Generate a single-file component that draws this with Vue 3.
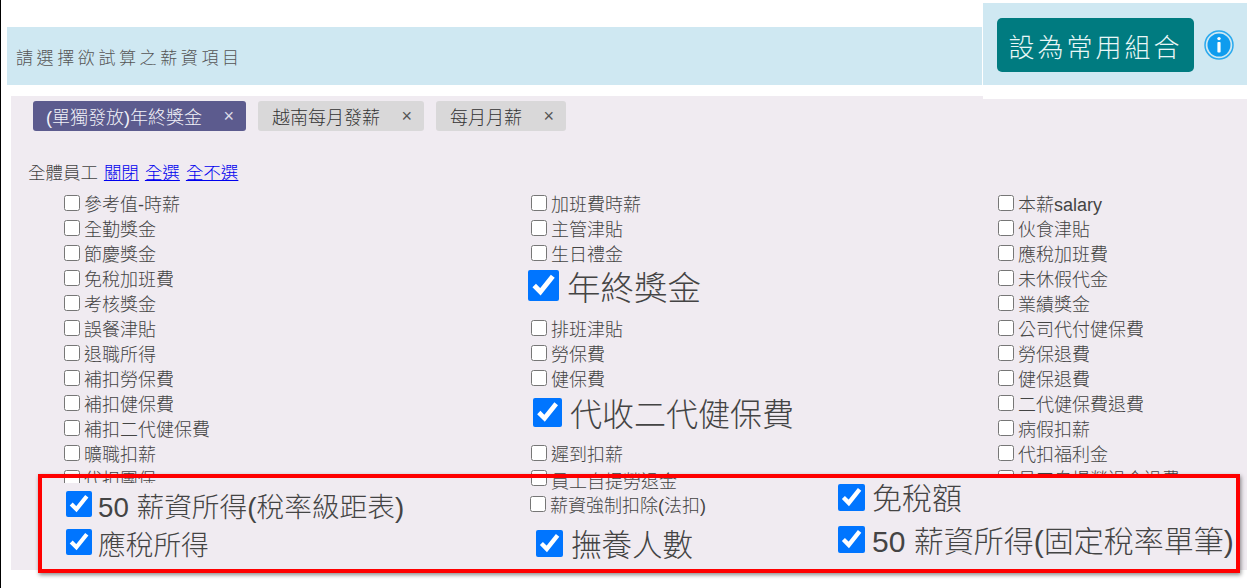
<script setup>
import { ref } from 'vue';

const tags = ref([
  { text: '(單獨發放)年終獎金', active: true },
  { text: '越南每月發薪', active: false },
  { text: '每月月薪', active: false }
]);

const columns = ref([
  [
    { text: '參考值-時薪' }, { text: '全勤獎金' }, { text: '節慶獎金' }, { text: '免稅加班費' },
    { text: '考核獎金' }, { text: '誤餐津貼' }, { text: '退職所得' }, { text: '補扣勞保費' },
    { text: '補扣健保費' }, { text: '補扣二代健保費' }, { text: '曠職扣薪' }, { text: '代扣團保' }
  ],
  [
    { text: '加班費時薪' }, { text: '主管津貼' }, { text: '生日禮金' },
    { text: '年終獎金', checked: true, cls: 'big-year' },
    { text: '排班津貼' }, { text: '勞保費' }, { text: '健保費' },
    { text: '代收二代健保費', checked: true, cls: 'big-fee' },
    { text: '遲到扣薪' }, { text: '員工自提勞退金', cls: 'low' }
  ],
  [
    { text: '本薪salary' }, { text: '伙食津貼' }, { text: '應稅加班費' }, { text: '未休假代金' },
    { text: '業績獎金' }, { text: '公司代付健保費' }, { text: '勞保退費' }, { text: '健保退費' },
    { text: '二代健保費退費' }, { text: '病假扣薪' }, { text: '代扣福利金' }, { text: '員工自提勞退金退費' }
  ]
]);
</script>

<template>
  <div class="page">
    <div class="head">
      <div class="head-title">請選擇欲試算之薪資項目</div>
      <div class="head-side">
        <div class="side-inner">
          <button class="save-btn">設為常用組合</button>
          <svg class="info" viewBox="0 0 30 30" width="30" height="30">
            <circle cx="15" cy="15" r="14" fill="none" stroke="#2aa9ee" stroke-width="1.5" />
            <circle cx="15" cy="15" r="11.5" fill="#0f9cee" />
            <circle cx="15" cy="8.6" r="1.7" fill="#fff" />
            <rect x="13.4" y="12" width="3.2" height="10.5" rx="0.8" fill="#fff" />
          </svg>
        </div>
      </div>
    </div>

    <div class="panel">
      <div class="tags">
        <div v-for="tag in tags" :key="tag.text" class="tag" :class="{ active: tag.active }">
          <span>{{ tag.text }}</span>
          <span class="tag-x">×</span>
        </div>
      </div>

      <div class="group-line">
        全體員工
        <a class="first-link" href="#">關閉</a>
        <a href="#">全選</a>
        <a href="#">全不選</a>
      </div>

      <div class="columns">
        <div v-for="(col, i) in columns" :key="i" class="col">
          <label v-for="item in col" :key="item.text" class="row" :class="item.cls">
            <input type="checkbox" :checked="item.checked" />
            <span>{{ item.text }}</span>
          </label>
        </div>
      </div>

      <div class="mark">
        <div class="mark-col first">
          <label class="mark-row"><input type="checkbox" checked /><span>50 薪資所得(稅率級距表)</span></label>
          <label class="mark-row"><input type="checkbox" checked /><span>應稅所得</span></label>
        </div>
        <div class="mark-col second">
          <label class="plain"><input type="checkbox" /><span>薪資強制扣除(法扣)</span></label>
          <label class="raise"><input type="checkbox" checked /><span>撫養人數</span></label>
        </div>
        <div class="mark-col third">
          <label class="tax"><input type="checkbox" checked /><span>免稅額</span></label>
          <label class="tax last"><input type="checkbox" checked /><span>50 薪資所得(固定稅率單筆)</span></label>
        </div>
      </div>
    </div>
  </div>
</template>

<style>
html,
body {
  margin: 0;
  background: #fff;
}
</style>

<style scoped>
.page {
  width: 1254px;
  height: 588px;
  box-sizing: border-box;
  border-left: 1px solid #000;
  padding: 3px 7px 0 6px;
  overflow: hidden;
  font-family: "Liberation Sans", "Noto Sans CJK TC", sans-serif;
  font-weight: 300;
  color: #444;
}

.head {
  display: flex;
  height: 96px;
}

.head-title {
  flex: 1;
  height: 58px;
  margin-top: 24px;
  padding-left: 9px;
  background: #cfe8f2;
  font-size: 17px;
  letter-spacing: 3.6px;
  line-height: 64px;
  color: #555;
}

.head-side {
  width: 264px;
  margin-left: 1px;
  padding-bottom: 14px;
  background: #fff;
  position: relative;
  z-index: 1;
}

.side-inner {
  display: flex;
  align-items: center;
  height: 82px;
  padding-left: 14px;
  padding-top: 2px;
  box-sizing: border-box;
  background: #cfe8f2;
}

.save-btn {
  width: 197px;
  height: 54px;
  border: none;
  border-radius: 5px;
  background: #007b80;
  color: #e9f7f7;
  font-family: inherit;
  font-weight: 300;
  font-size: 26px;
  letter-spacing: 3px;
  padding: 0;
}

.info {
  margin-left: 10px;
}

.panel {
  position: relative;
  height: 474px;
  margin-left: 4px;
  margin-top: -3px;
  background: #f0ebf1;
}

.tags {
  display: flex;
  gap: 12px;
  padding: 5px 0 0 22px;
}

.tag {
  display: flex;
  align-items: center;
  justify-content: space-between;
  height: 30px;
  padding: 0 12px 0 14px;
  gap: 21.5px;
  border-radius: 3px;
  background: #d9d8d9;
  font-size: 18px;
  color: #333;
}

.tag.active {
  padding-left: 13px;
  background: #5c5b8e;
  color: #f2f2f8;
}

.tag-x {
  font-size: 18px;
  color: #555;
}

.tag.active .tag-x {
  color: #dcdce8;
}

.group-line {
  padding: 30px 0 0 17px;
  height: 24px;
  font-size: 17.5px;
  line-height: 24px;
}

.group-line a {
  margin-left: 6px;
  color: #00e;
}

.group-line a.first-link {
  margin-left: 1px;
}

.columns {
  display: flex;
  padding: 5px 0 0 53px;
}

.col {
  display: flex;
  flex-direction: column;
  flex: none;
  width: 467px;
}

.row {
  display: flex;
  align-items: center;
  height: 25px;
  font-size: 18px;
}

input {
  margin: 0;
  flex: none;
}

.row input {
  width: 16px;
  height: 16px;
  margin-right: 4px;
}

.row.low span {
  padding-top: 4px;
}

.row.big-year {
  height: 50px;
  box-sizing: border-box;
  padding-bottom: 10px;
  margin-left: -3px;
  font-size: 33.5px;
}

.row.big-year input {
  width: 31px;
  height: 31px;
  margin-right: 8px;
}

.row.big-fee {
  height: 50px;
  box-sizing: border-box;
  padding-bottom: 6px;
  margin-left: 2px;
  font-size: 32px;
}

.row.big-fee input {
  width: 29px;
  height: 29px;
  margin-right: 8px;
}

.mark {
  position: absolute;
  left: 27px;
  top: 378px;
  display: flex;
  width: 1202px;
  height: 99px;
  box-sizing: border-box;
  border: 4px solid #f00;
  box-shadow: 1px 2px 4px rgba(0, 0, 0, 0.45);
}

.mark-col {
  display: flex;
  flex-direction: column;
}

.mark-col input {
  width: 26px;
  height: 26px;
  margin-right: 6px;
}

.mark-col.first {
  width: 478px;
  margin-top: 5px;
  padding: 2px 0 0 24px;
  box-sizing: border-box;
  background: #f0ebf1;
}

.mark-row {
  display: flex;
  align-items: center;
  height: 38px;
  font-size: 27.7px;
}

.mark-row span {
  padding-top: 2px;
}

.mark-col.second {
  width: 310px;
  margin-top: 16px;
  padding-left: 10px;
  box-sizing: border-box;
  background: #f0ebf1;
}

.plain {
  display: flex;
  align-items: center;
  height: 20px;
  font-size: 18px;
}

.plain input {
  width: 16px;
  height: 16px;
  margin-right: 4px;
}

.raise {
  display: flex;
  align-items: center;
  height: 38px;
  margin: 10px 0 0 6px;
  font-size: 30.5px;
}

.raise input {
  width: 27px;
  height: 27px;
  margin-right: 8px;
}

.mark-col.third {
  flex: 1;
  padding-left: 8px;
  background: #f0ebf1;
}

.tax {
  display: flex;
  align-items: center;
  height: 40px;
  font-size: 30px;
}

.tax:first-child {
  height: 38px;
  margin-bottom: 2px;
}

.tax:first-child span {
  padding-bottom: 2px;
}

.tax input {
  width: 27px;
  height: 27px;
  margin-right: 7px;
}

.tax.last {
  height: 42px;
}
</style>
